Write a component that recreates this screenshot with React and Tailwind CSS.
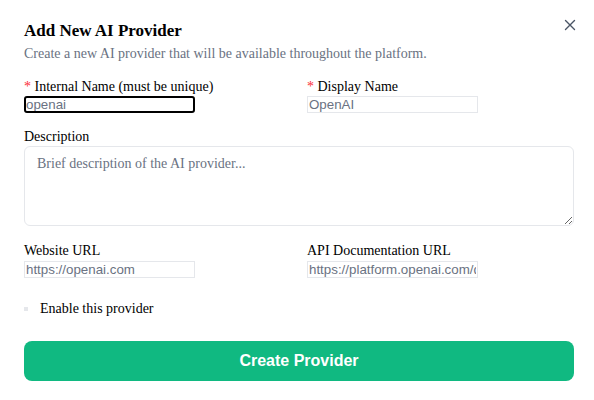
import React from "react";

export default function App() {
  const serif = "font-['Liberation_Serif',serif]";
  const sans = "font-['Liberation_Sans',Arial,sans-serif]";
  return (
    <div className={`relative w-[594px] h-[400px] bg-white text-black ${serif}`}>
      <button className="absolute left-[563px] top-[18px] w-[14px] h-[14px] flex items-center justify-center text-gray-600">
        <svg width="14" height="14" viewBox="0 0 14 14" fill="none" stroke="currentColor" strokeWidth="1.4" strokeLinecap="round">
          <path d="M2.5 2.5l9 9M11.5 2.5l-9 9" />
        </svg>
      </button>
      <div className="pl-6 pr-5 pt-[21px]">
        <h2 className="text-[17px] leading-[20px] font-bold">Add New AI Provider</h2>
        <p className="mt-[3px] text-[14px] leading-[20px] text-gray-500">
          Create a new AI provider that will be available throughout the platform.
        </p>

        <div className="mt-[13px] grid grid-cols-2 gap-x-4">
          <div className="flex flex-col items-start">
            <label className="text-[14px] leading-[19px]">
              <span className="text-red-500">*</span> Internal Name (must be unique)
            </label>
            <input
              placeholder="openai"
              className={`w-[171px] h-[17px] rounded-[3px] border-2 border-black px-0 text-[13.33px] leading-[13px] placeholder:text-gray-500 outline-none ${sans}`}
            />
          </div>
          <div className="flex flex-col items-start">
            <label className="text-[14px] leading-[19px]">
              <span className="text-red-500">*</span> Display Name
            </label>
            <input
              placeholder="OpenAI"
              className={`w-[171px] h-[17px] border border-gray-200 px-[1px] text-[13.33px] leading-[13px] placeholder:text-gray-500 outline-none ${sans}`}
            />
          </div>
        </div>

        <div className="mt-[14px] flex flex-col">
          <label className="text-[14px] leading-[19px]">Description</label>
          <textarea
            placeholder="Brief description of the AI provider..."
            className={`h-[80px] w-full rounded-md border border-gray-200 px-3 py-[7px] text-[14px] leading-[20px] placeholder:text-gray-500 outline-none ${serif}`}
          />
        </div>

        <div className="mt-[15px] grid grid-cols-2 gap-x-4">
          <div className="flex flex-col items-start">
            <label className="text-[14px] leading-[20px]">Website URL</label>
            <input
              placeholder="https://openai.com"
              className={`w-[171px] h-[17px] border border-gray-200 px-[1px] text-[13.33px] leading-[13px] placeholder:text-gray-500 outline-none ${sans}`}
            />
          </div>
          <div className="flex flex-col items-start">
            <label className="text-[14px] leading-[20px]">API Documentation URL</label>
            <input
              placeholder="https://platform.openai.com/docs"
              className={`w-[171px] h-[17px] border border-gray-200 px-[1px] text-[13.33px] leading-[13px] placeholder:text-gray-500 outline-none ${sans}`}
            />
          </div>
        </div>

        <div className="mt-[21px] flex items-center gap-3">
          <span className="w-[4px] h-[4px] bg-gray-200" />
          <span className="text-[14px] leading-[20px]">Enable this provider</span>
        </div>

        <button className={`mt-[22px] w-full h-[40px] rounded-lg bg-[#10b981] text-white text-[16px] font-bold ${sans}`}>
          Create Provider
        </button>
      </div>
    </div>
  );
}
